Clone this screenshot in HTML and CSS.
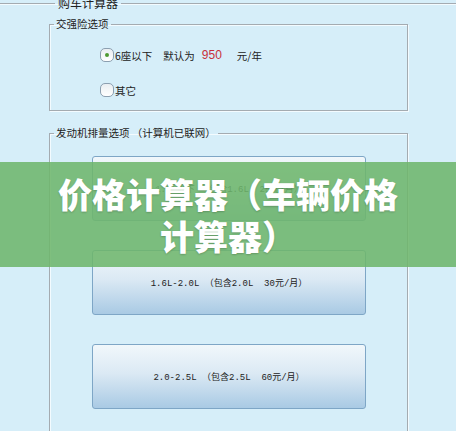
FILE: index.html
```html
<!DOCTYPE html>
<html lang="zh-CN">

<head>
    <meta charset="UTF-8">
    <meta name="viewport" content="width=device-width, initial-scale=1.0">
    <link rel="stylesheet" href="styles.css">
</head>

<body>
    <fieldset class="outer">
        <legend class="outer-legend">购车计算器</legend>

        <fieldset class="group group-insure">
            <legend class="group-legend">交强险选项</legend>
            <div class="group-body">
                <div class="opt-row">
                    <span class="radio checked"></span>
                    <span class="opt-label">6座以下</span>
                    <span class="opt-default">默认为</span>
                    <span class="price">950</span>
                    <span class="unit">元/年</span>
                </div>
                <div class="opt-row">
                    <span class="radio"></span>
                    <span class="opt-label">其它</span>
                </div>
            </div>
        </fieldset>

        <fieldset class="group group-engine">
            <legend class="group-legend">发动机排量选项 （计算机已联网）</legend>
            <div class="btn-list">
                <button class="size-btn">1.6L以下 （包含1.6L&nbsp;&nbsp;25元/月）</button>
                <button class="size-btn">1.6L-2.0L （包含2.0L&nbsp;&nbsp;30元/月）</button>
                <button class="size-btn">2.0-2.5L （包含2.5L&nbsp;&nbsp;60元/月）</button>
            </div>
        </fieldset>
    </fieldset>

    <div class="banner">
        <h1 class="banner-title">价格计算器（车辆价格<br>计算器）</h1>
    </div>
</body>

</html>
```

FILE: styles.css
```css
body {
    margin: 0;
    height: 431px;
    overflow: hidden;
    background-color: #d6eef9;
    font-family: "Noto Sans CJK SC", "Liberation Sans", sans-serif;
    color: #222;
    position: relative;
}

/* fieldset frames */
.outer {
    margin: -4px -10px 0 -4px;
    padding: 0 0 0 52px;
    border: 1px solid #a4abb1;
    box-shadow: inset 1px 1px 0 #f3fbff;
}

.outer-legend {
    margin-left: 6px;
    padding: 0 3px;
    font-size: 12px;
    line-height: 14px;
}

.group {
    box-sizing: border-box;
    width: 359px;
    margin: 7px 0 0 0;
    padding: 0;
    border: 1px solid #a4abb1;
    box-shadow: inset 1px 1px 0 #f3fbff, 1px 1px 0 #f3fbff;
}

.group-legend {
    margin-left: 4px;
    padding: 0 2px;
    font-size: 10.5px;
    line-height: 14px;
}

.group-engine {
    margin-top: 15px;
    height: 320px;
}

/* insurance options */
.group-body {
    padding: 17px 0 13px 50px;
    display: flex;
    flex-direction: column;
    gap: 21px;
}

.opt-row {
    display: flex;
    align-items: center;
    height: 14px;
    font-size: 10.5px;
}

.radio {
    box-sizing: border-box;
    width: 14px;
    height: 14px;
    border: 1px solid #8c9fb0;
    border-radius: 5px;
    background: linear-gradient(#e9eef2, #ffffff);
    display: flex;
    align-items: center;
    justify-content: center;
    margin-right: 1px;
}

.radio.checked::after {
    content: "";
    width: 4px;
    height: 4px;
    border-radius: 50%;
    background: #4e9a32;
}

.opt-default {
    margin-left: 11px;
}

.price {
    margin-left: 7px;
    font-family: "Liberation Sans", sans-serif;
    font-size: 12px;
    color: #c8313a;
}

.unit {
    margin-left: 15px;
}

/* engine buttons */
.btn-list {
    padding: 16px 0 0 42px;
    display: flex;
    flex-direction: column;
    gap: 29px;
}

.size-btn {
    width: 274px;
    height: 65px;
    border: 1px solid #7ea6c6;
    border-radius: 3px;
    background: linear-gradient(#f1f7fb, #dbe9f4 45%, #a9cae4);
    font-family: "Liberation Mono", "Noto Sans CJK SC", monospace;
    font-size: 9px;
    color: #222;
    cursor: pointer;
}

/* green title band laid over the screenshot */
.banner {
    position: absolute;
    left: 0;
    right: 0;
    top: 162px;
    height: 105px;
    background-color: rgba(110, 182, 108, 0.88);
    display: flex;
    align-items: center;
    justify-content: center;
}

.banner-title {
    margin: 0;
    text-align: center;
    color: #fff;
    font-size: 34px;
    line-height: 42px;
    font-weight: 900;
    text-shadow: 0 1px 2px rgba(0, 0, 0, 0.2);
}
```
